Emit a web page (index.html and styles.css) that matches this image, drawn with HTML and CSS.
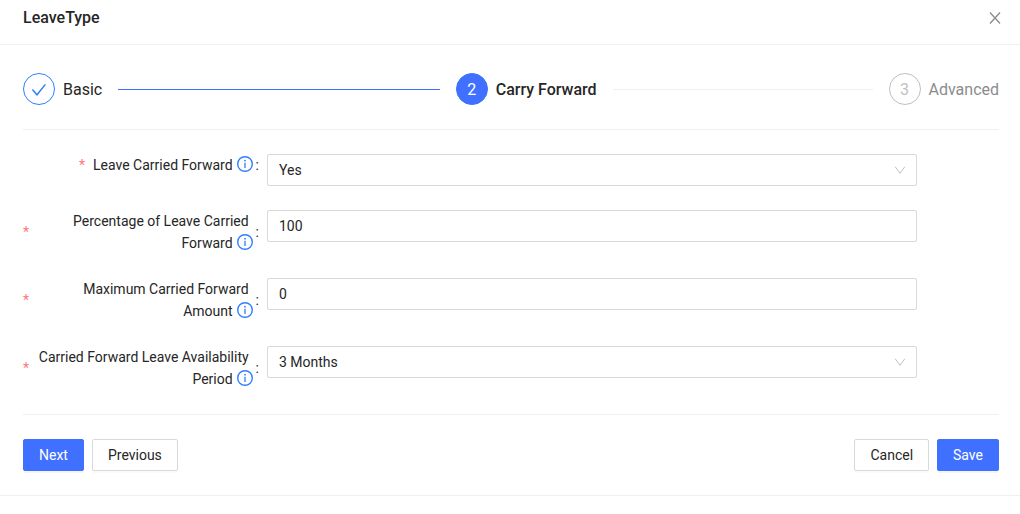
FILE: index.html
```html
<!DOCTYPE html>
<html lang="en">
<head>
<meta charset="utf-8">
<meta name="viewport" content="width=device-width, initial-scale=1">
<title>LeaveType</title>
<link rel="stylesheet" href="styles.css">
</head>
<body>
<svg class="sprite" aria-hidden="true">
  <symbol id="info" viewBox="0 0 16 16">
    <circle cx="8" cy="8" r="7.3" fill="none" stroke="currentColor" stroke-width="1.4"/>
    <path d="M8 6.8V12" stroke="currentColor" stroke-width="1.3"/>
    <circle cx="8" cy="4.7" r="0.9" fill="currentColor"/>
  </symbol>
  <symbol id="chevron" viewBox="0 0 12 12">
    <path d="M1.2 2.8 6 9.2l4.8-6.4" fill="none" stroke="currentColor"/>
  </symbol>
</svg>
<main class="dialog">
  <header class="dialog-header">
    <h1 class="dialog-title">LeaveType</h1>
    <button class="close" type="button" aria-label="Close">
      <svg width="16" height="16" viewBox="0 0 16 16"><path d="M3 2.5 13 13.5M13 2.5 3 13.5" fill="none" stroke="currentColor" stroke-width="1.3"/></svg>
    </button>
  </header>
  <form class="dialog-body">
    <ol class="steps">
      <li class="step done">
        <span class="step-icon"><svg width="16" height="16" viewBox="0 0 16 16"><path d="M1.4 7.4 6 12.8 14.4 2.4" fill="none" stroke="currentColor" stroke-width="1.5"/></svg></span>
        <span class="step-title">Basic</span>
      </li>
      <li class="step active">
        <span class="step-icon">2</span>
        <span class="step-title">Carry Forward</span>
      </li>
      <li class="step">
        <span class="step-icon">3</span>
        <span class="step-title">Advanced</span>
      </li>
    </ol>
    <div class="fields">
      <div class="field">
        <label class="label" for="carried"><span class="label-text">Leave Carried Forward<svg class="info"><use href="#info"/></svg></span></label>
        <div class="control">
          <select class="input" id="carried"><option>Yes</option><option>No</option></select>
          <svg class="chevron"><use href="#chevron"/></svg>
        </div>
      </div>
      <div class="field">
        <label class="label" for="percentage"><span class="label-text">Percentage of Leave Carried Forward<svg class="info"><use href="#info"/></svg></span></label>
        <div class="control"><input class="input" id="percentage" type="text" value="100"></div>
      </div>
      <div class="field">
        <label class="label" for="maximum"><span class="label-text">Maximum Carried Forward Amount<svg class="info"><use href="#info"/></svg></span></label>
        <div class="control"><input class="input" id="maximum" type="text" value="0"></div>
      </div>
      <div class="field">
        <label class="label" for="period"><span class="label-text">Carried Forward Leave Availability Period<svg class="info"><use href="#info"/></svg></span></label>
        <div class="control">
          <select class="input" id="period"><option>3 Months</option><option>6 Months</option></select>
          <svg class="chevron"><use href="#chevron"/></svg>
        </div>
      </div>
    </div>
    <div class="actions">
      <div class="button-group">
        <button class="button primary" type="button">Next</button>
        <button class="button" type="button">Previous</button>
      </div>
      <div class="button-group">
        <button class="button" type="button">Cancel</button>
        <button class="button primary" type="submit">Save</button>
      </div>
    </div>
  </form>
</main>
</body>
</html>
```
FILE: styles.css
```css
* {
  box-sizing: border-box;
}

body {
  margin: 0;
  background: #fff;
  color: #262626;
  font: 14px/22px Roboto, sans-serif;
}

.sprite {
  position: absolute;
  width: 0;
  height: 0;
}

.dialog-header {
  display: flex;
  align-items: center;
  justify-content: space-between;
  padding: 7px 17px 15px 23px;
  border-bottom: 1px solid #f0f0f0;
}

.dialog-title {
  margin: 0;
  font-size: 16px;
  font-weight: 500;
  line-height: 22px;
}

.close {
  display: flex;
  padding: 0;
  border: 0;
  background: none;
  color: #8c8c8c;
  cursor: pointer;
}

.dialog-body {
  padding: 28px 21px 24px 23px;
  border-bottom: 1px solid #f0f0f0;
}

.steps {
  display: flex;
  gap: 16px;
  margin: 0;
  padding: 0;
  list-style: none;
}

.step {
  display: flex;
  flex: 1;
  align-items: center;
  gap: 8px;
  color: #8c8c8c;
  font-size: 16px;
  line-height: 30px;
  white-space: nowrap;
}

.step:last-child {
  flex: none;
}

.step:not(:last-child)::after {
  content: "";
  flex: 1;
  height: 1px;
  margin-left: 8px;
  background: #f0f0f0;
}

.step-icon {
  display: flex;
  align-items: center;
  justify-content: center;
  width: 32px;
  height: 32px;
  padding-top: 1px;
  border: 1px solid #bfbfbf;
  border-radius: 50%;
  color: #bfbfbf;
}

.step-title {
  padding-top: 2px;
}

.step.done,
.step.active {
  color: #262626;
}

.step.done .step-icon {
  border-color: #2f7fff;
  color: #2f7fff;
}

.step.done::after {
  background: #4070ff;
}

.step.active .step-icon {
  border-color: #4070ff;
  background: #4070ff;
  color: #fff;
}

.step.active .step-title {
  font-weight: 500;
}

.fields {
  display: flex;
  flex-direction: column;
  gap: 24px;
  margin: 24px 0;
  padding: 24px 0;
  border: solid #f0f0f0;
  border-width: 1px 0;
}

.field {
  display: grid;
  grid-template-columns: 25% 66.6%;
  align-items: start;
}

.label {
  display: flex;
  align-items: center;
  justify-content: flex-end;
}

.label::before {
  content: "*";
  margin-right: 8px;
  color: #ff7875;
}

.label::after {
  content: ":";
  margin: 0 8px 0 3px;
}

.label-text {
  padding-right: 4px;
  text-align: right;
}

.info {
  width: 16px;
  height: 16px;
  margin: 0 -4px 0 4px;
  color: #2f7fff;
  vertical-align: -2px;
}

.control {
  display: grid;
  align-items: center;
}

.control > * {
  grid-area: 1 / 1;
}

.input {
  width: 100%;
  height: 32px;
  margin: 0;
  padding: 4px 11px;
  border: 1px solid #d9d9d9;
  border-radius: 2px;
  background: #fff;
  color: inherit;
  font: inherit;
  appearance: none;
}

.chevron {
  width: 12px;
  height: 12px;
  margin-right: 11px;
  color: #bfbfbf;
  justify-self: end;
  pointer-events: none;
}

.actions,
.button-group {
  display: flex;
  justify-content: space-between;
  gap: 8px;
}

.button {
  height: 32px;
  padding: 4px 15px;
  border: 1px solid #d9d9d9;
  border-radius: 2px;
  background: #fff;
  box-shadow: 0 2px 0 rgba(0, 0, 0, 0.02);
  color: inherit;
  font: inherit;
  cursor: pointer;
}

.button.primary {
  border-color: #4070ff;
  background: #4070ff;
  box-shadow: 0 2px 0 rgba(0, 0, 0, 0.04);
  color: #fff;
}
```
